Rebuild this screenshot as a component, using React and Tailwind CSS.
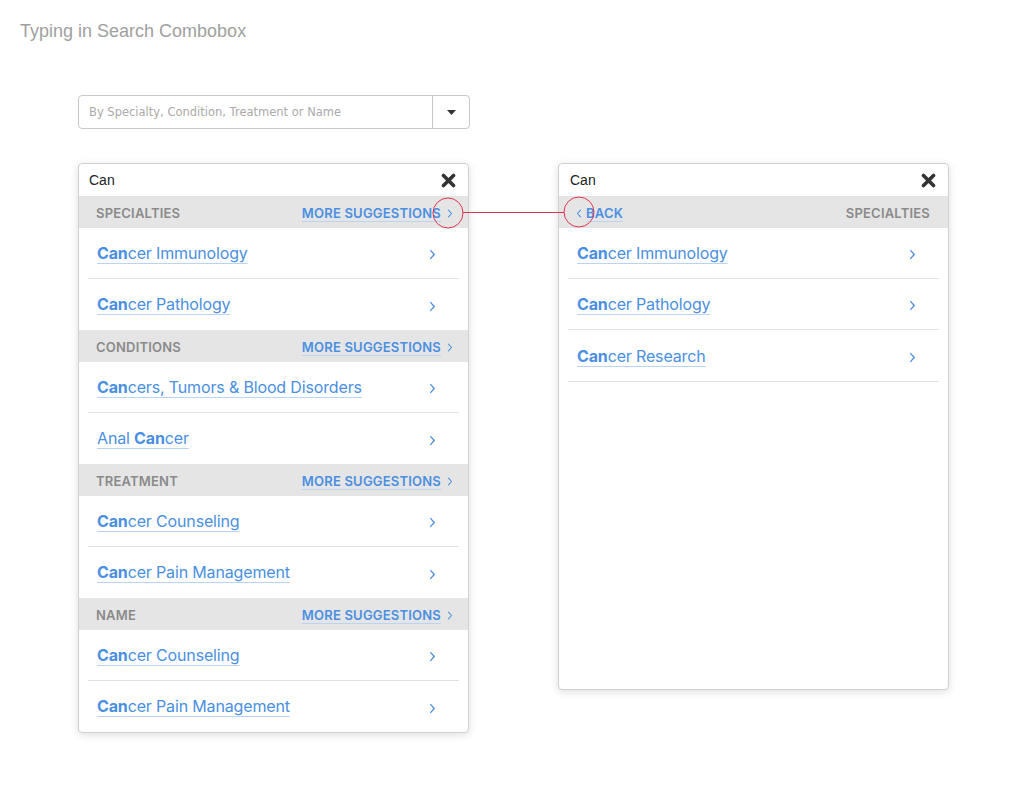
import React from "react";

const Chevron = ({ left = false, w = 7, h = 11, sw = 1.5 }) => (
  <svg width={w} height={h} viewBox="0 0 8 12" className="shrink-0">
    <polyline
      points={left ? "6,1.5 2,6 6,10.5" : "2,1.5 6,6 2,10.5"}
      fill="none"
      stroke="currentColor"
      strokeWidth={sw}
      strokeLinecap="round"
      strokeLinejoin="round"
    />
  </svg>
);

const XIcon = () => (
  <svg width="15" height="15" viewBox="0 0 15 15">
    <path d="M2.5 2.5 L12.5 12.5 M12.5 2.5 L2.5 12.5" stroke="#333" strokeWidth="3.6" strokeLinecap="round" />
  </svg>
);

const Item = ({ pre = "", bold = "Can", post, last = false }) => (
  <div
    className={
      "mx-[9px] h-[51px] flex items-center justify-between pl-[9px] pr-[23px] " +
      (last ? "" : "border-b border-[#e2e2e2]")
    }
  >
    <span className="text-[16px] text-[#4a8fe2] underline decoration-[#bcd4f3] underline-offset-[4px] decoration-1 tracking-[-0.15px] mb-[1px]">
      {pre}
      <b className="font-bold">{bold}</b>
      {post}
    </span>
    <span className="text-[#4a8fe2] mt-[3px]">
      <Chevron />
    </span>
  </div>
);

const SectionHeader = ({ label }) => (
  <div className="h-[32px] bg-[#e5e5e5] flex items-center justify-between pl-[17px] pr-[15px] pt-[3px] text-[13px] font-semibold tracking-[0.2px]">
    <span className="text-[#8a8a8a]">{label}</span>
    <span className="flex items-center gap-[6px] text-[#4a8fe2]">
      <span className="underline decoration-[#bcd4f3] underline-offset-[3px]">MORE SUGGESTIONS</span>
      <Chevron w={6} h={9} sw={1.4} />
    </span>
  </div>
);

const SearchHeader = () => (
  <div className="h-[32px] flex items-center justify-between pl-[10px] pr-[12px] font-['Liberation_Sans',sans-serif]">
    <span className="text-[14px] text-[#222]">Can</span>
    <XIcon />
  </div>
);

export default function App() {
  return (
    <div className="relative w-[1024px] h-[809px] bg-white font-['Inter',sans-serif]">
      <div className="pl-[20px] pt-[20px] text-[18px] leading-[22px] text-[#a0a0a0] font-['Liberation_Sans',sans-serif]">
        Typing in Search Combobox
      </div>

      <div className="ml-[78px] mt-[53px] w-[392px] h-[34px] border border-[#c8c8c8] rounded-[4px] flex items-stretch">
        <div className="flex-1 flex items-center pl-[10px] pt-[2px] text-[11.5px] text-[#aaaaaa] font-['DejaVu_Sans',sans-serif]">
          By Specialty, Condition, Treatment or Name
        </div>
        <div className="w-[37px] border-l border-[#c8c8c8] flex items-center justify-center">
          <svg width="9" height="5" viewBox="0 0 9 5">
            <path d="M0 0 L9 0 L4.5 5 Z" fill="#333" />
          </svg>
        </div>
      </div>

      <div className="flex items-start ml-[78px] mt-[34px] gap-[89px]">
        <div className="w-[391px] border border-[#d0d0d0] rounded-[4px] bg-white shadow-[0_2px_8px_rgba(0,0,0,0.13)] overflow-hidden">
          <SearchHeader />
          <SectionHeader label="SPECIALTIES" />
          <Item post="cer Immunology" />
          <Item post="cer Pathology" last />
          <SectionHeader label="CONDITIONS" />
          <Item post="cers, Tumors & Blood Disorders" />
          <Item pre="Anal " post="cer" last />
          <SectionHeader label="TREATMENT" />
          <Item post="cer Counseling" />
          <Item post="cer Pain Management" last />
          <SectionHeader label="NAME" />
          <Item post="cer Counseling" />
          <Item post="cer Pain Management" last />
        </div>

        <div className="w-[391px] h-[527px] border border-[#d0d0d0] rounded-[4px] bg-white shadow-[0_2px_8px_rgba(0,0,0,0.13)] overflow-hidden">
          <div className="pl-[1px]">
            <SearchHeader />
          </div>
          <div className="h-[32px] bg-[#e5e5e5] flex items-center justify-between pl-[17px] pr-[18px] pt-[3px] text-[13px] font-semibold tracking-[0.2px]">
            <span className="flex items-center gap-[4px] text-[#4a8fe2]">
              <Chevron left w={6} h={9} sw={1.4} />
              <span className="underline decoration-[#bcd4f3] underline-offset-[3px]">BACK</span>
            </span>
            <span className="text-[#8a8a8a]">SPECIALTIES</span>
          </div>
          <Item post="cer Immunology" />
          <Item post="cer Pathology" />
          <div className="h-[1px]" />
          <Item post="cer Research" />
        </div>
      </div>

      <svg className="absolute left-0 top-0 pointer-events-none" width="1024" height="809">
        <circle cx="448" cy="213" r="15" fill="none" stroke="#e0324f" strokeWidth="1" />
        <circle cx="579" cy="212" r="15" fill="none" stroke="#e0324f" strokeWidth="1" />
        <line x1="463" y1="212.5" x2="564" y2="212.5" stroke="#e0324f" strokeWidth="1" />
      </svg>
    </div>
  );
}
